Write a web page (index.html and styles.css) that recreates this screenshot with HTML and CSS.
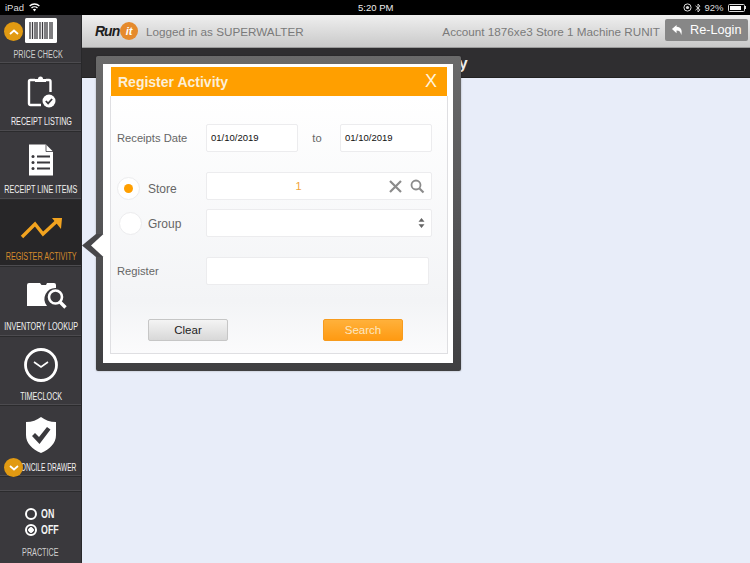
FILE: index.html
```html
<!DOCTYPE html>
<html lang="en">
<head>
<meta charset="utf-8">
<title>Register Activity</title>
<link rel="stylesheet" href="styles.css">
</head>
<body>
<div class="status">
  <div class="st-left"><span>iPad</span>
    <svg class="wifi" width="11" height="9" viewBox="0 0 13 10"><path d="M6.500 9.600 4.600 7.400a2.800 2.800 0 0 1 3.800 0zM3.500 6.200 2.400 5a6 6 0 0 1 8.200 0L9.500 6.200a4.400 4.400 0 0 0-6 0zM1.300 3.800.2 2.600a9.200 9.200 0 0 1 12.600 0l-1.100 1.200a7.600 7.600 0 0 0-10.400 0z" fill="#fff"/></svg>
  </div>
  <div class="st-time">5:20 PM</div>
  <div class="st-right">
    <svg width="9" height="9" viewBox="0 0 9 9"><circle cx="4.500" cy="4.500" r="3.600" fill="none" stroke="#ddd" stroke-width="1"/><circle cx="4.500" cy="4.500" r="1.600" fill="#ddd"/></svg>
    <svg width="6" height="10" viewBox="0 0 6 10"><path d="M.5 2.800 5 6.800 3 9V1l2 2.200L.5 7.200" fill="none" stroke="#ddd" stroke-width=".9"/></svg>
    <span>92%</span>
    <span class="batt"><span class="batt-fill"></span></span><span class="batt-tip"></span>
  </div>
</div>
<div class="app">
  <nav class="side">
    <div class="item i-price">
      <svg width="32" height="25" viewBox="0 0 32 25"><rect width="32" height="25" rx="1.500" fill="#fff"/><path d="M5 4v17M7.500 4v17M10 4v17M12 4v17M15 4v17M17.500 4v17M20 4v17M22 4v17M25 4v17M27 4v17" stroke="#3a393d" stroke-width="1.300"/></svg>
      <span class="lbl dim">PRICE CHECK</span>
    </div>
    <div class="item i-r">
      <svg width="30" height="34" viewBox="0 0 30 34"><path d="M9 6H4.500A1.500 1.500 0 0 0 3 7.500v22A1.500 1.500 0 0 0 4.500 31H15M20 6h3a1.500 1.500 0 0 1 1.500 1.500V18" fill="none" stroke="#fff" stroke-width="2.400"/><path d="M9 8V5h3a2.500 2.500 0 0 1 5 0h3v3z" fill="#fff"/><circle cx="23" cy="27" r="6.500" fill="#fff"/><path d="m19.800 27 2.300 2.400 4-4.400" fill="none" stroke="#3a393d" stroke-width="1.800"/></svg>
      <span class="lbl">RECEIPT LISTING</span>
    </div>
    <div class="item i-r i-li">
      <svg width="26" height="33" viewBox="0 0 26 33"><path d="M1 1h17l7 7v24H1z" fill="#fff"/><path d="M18 1v7h7" fill="none" stroke="#3a393d" stroke-width=".8"/><path d="M9 13h13M9 19h13M9 25h13" stroke="#3a393d" stroke-width="2"/><circle cx="5" cy="13" r="1.500" fill="#3a393d"/><circle cx="5" cy="19" r="1.500" fill="#3a393d"/><circle cx="5" cy="25" r="1.500" fill="#3a393d"/></svg>
      <span class="lbl">RECEIPT LINE ITEMS</span>
    </div>
    <div class="item i-r active">
      <svg width="42" height="24" viewBox="0 0 42 24"><path d="m2 20 13-13 8 10L37 4" fill="none" stroke="#f2a31f" stroke-width="3.400"/><path d="M32 1h10l-1 11z" fill="#f2a31f"/></svg>
      <span class="lbl orange">REGISTER ACTIVITY</span>
    </div>
    <div class="item i-r i-inv">
      <svg width="42" height="28" viewBox="0 0 42 28"><path d="M1 4a2 2 0 0 1 2-2h11l1.500 2H20l1-2h7a2 2 0 0 1 2 2v3a11 11 0 0 0-9 18H1z" fill="#fff"/><circle cx="29.500" cy="16" r="6.500" fill="none" stroke="#fff" stroke-width="2.600"/><path d="m34 21 5.500 5.500" stroke="#fff" stroke-width="3.400"/></svg>
      <span class="lbl">INVENTORY LOOKUP</span>
    </div>
    <div class="item i-r i-clock">
      <svg width="34" height="34" viewBox="0 0 34 34"><circle cx="17" cy="17" r="15.500" fill="none" stroke="#fff" stroke-width="2.800"/><path d="m10 14 7 5 7-5" fill="none" stroke="#fff" stroke-width="1.600"/></svg>
      <span class="lbl">TIMECLOCK</span>
    </div>
    <div class="item i-draw">
      <svg width="32" height="38" viewBox="0 0 32 38"><path d="M16 1c4 3 9 5 15 5v13c0 8-6 14-15 18C7 33 1 27 1 19V6c6 0 11-2 15-5z" fill="#fff"/><path d="m7 20 3-3 4 4 8-10 3.500 2.500L14.500 28z" fill="#3a393d"/></svg>
      <span class="lbl clip">RECONCILE DRAWER</span>
    </div>
    <div class="spacer"></div>
    <div class="item i-prac">
      <div class="onoff">
        <div class="oo-row"><span class="oo"></span><span class="oo-txt">ON</span></div>
        <div class="oo-row"><span class="oo sel"></span><span class="oo-txt">OFF</span></div>
      </div>
      <span class="lbl dim">PRACTICE</span>
    </div>
    <span class="badge up"><svg width="10" height="6" viewBox="0 0 10 6"><path d="m1 5 4-3.500L9 5" fill="none" stroke="#fff" stroke-width="1.800"/></svg></span>
    <span class="badge down"><svg width="10" height="6" viewBox="0 0 10 6"><path d="m1 1 4 3.500L9 1" fill="none" stroke="#fff" stroke-width="1.800"/></svg></span>
  </nav>
  <main class="main">
    <header class="top">
      <div class="logo"><span class="run">Run</span><span class="it">it</span></div>
      <span class="logged">Logged in as SUPERWALTER</span>
      <span class="acct">Account 1876xe3 Store 1 Machine RUNIT</span>
      <button class="relogin">
        <svg width="13" height="12" viewBox="0 0 14 13"><path d="M6 1 1 5.500 6 10V7c3 0 4.500 1.500 5 5 1.500-5 0-8.500-5-9z" fill="#fff"/></svg>
        <span>Re-Login</span>
      </button>
    </header>
    <div class="titlebar">Register Activity</div>
    <div class="content"></div>
  </main>
</div>

<section class="popup">
  <div class="pop-in">
    <div class="pop-head"><span>Register Activity</span><span class="x">X</span></div>
    <div class="pop-body">
      <div class="row r-date">
        <label class="cap">Receipts Date</label>
        <div class="field f-date">01/10/2019</div>
        <span class="to">to</span>
        <div class="field f-date">01/10/2019</div>
      </div>
      <div class="row r-store">
        <span class="radio on"><span></span></span>
        <label class="opt">Store</label>
        <div class="field f-wide f-store">
          <span class="val">1</span>
          <svg class="ic-x" width="13" height="13" viewBox="0 0 13 13"><path d="m1 1 11 11M12 1 1 12" stroke="#8b8b8b" stroke-width="2.200"/></svg>
          <svg width="15" height="15" viewBox="0 0 15 15"><circle cx="6" cy="6" r="4.500" fill="none" stroke="#8b8b8b" stroke-width="1.800"/><path d="m9.500 9.500 4 4" stroke="#8b8b8b" stroke-width="2.200"/></svg>
        </div>
      </div>
      <div class="row r-group">
        <span class="radio g"></span>
        <label class="opt">Group</label>
        <div class="field f-wide f-group">
          <svg width="7" height="10" viewBox="0 0 7 10"><path d="M3.500 0 6.500 3.800H.5zM3.500 10 .5 6.200h6z" fill="#666"/></svg>
        </div>
      </div>
      <div class="row r-reg">
        <label class="cap">Register</label>
        <div class="field f-reg"></div>
      </div>
      <div class="row r-btn">
        <button class="btn clear">Clear</button>
        <button class="btn search">Search</button>
      </div>
    </div>
  </div>
  <svg class="pointer" width="24" height="30" viewBox="0 0 24 30"><path d="M14 3 0 14.500 14 26h8V3z" fill="#47474a"/><path d="M22 2.500 9 14.500 22 26.500z" fill="#fff"/></svg>
</section>
</body>
</html>
```
FILE: styles.css
```css
* { box-sizing: border-box; }
html, body { margin: 0; height: 100%; overflow: hidden; }
body { width: 750px; height: 563px; position: relative; font-family: "Liberation Sans", Arial, sans-serif; background: #e8edf9; display: flex; flex-direction: column; }

.status { height: 15px; background: #000; color: #ddd; font-size: 9.500px; display: flex; align-items: center; justify-content: space-between; padding: 0 4px 0 5px; position: relative; flex: none; }
.st-left { display: flex; align-items: center; gap: 5px; }
.st-time { position: absolute; left: 358px; top: 1px; font-size: 9.500px; color: #eee; line-height: 13px; }
.st-right { display: flex; align-items: center; gap: 3px; }
.batt { width: 17px; height: 8px; border: 1px solid #ddd; border-radius: 1.500px; padding: 1px; display: block; margin-left: 1px; }
.batt-fill { display: block; height: 100%; width: 92%; background: #fff; }
.batt-tip { width: 1.500px; height: 3px; background: #ddd; margin-left: -3px; }

.app { flex: 1; display: flex; min-height: 0; }
.side { width: 82px; flex: none; background: #3a393d; position: relative; display: flex; flex-direction: column; border-right: 1px solid #28282a; }
.item { display: flex; flex-direction: column; align-items: center; border-bottom: 1px solid #2b2b2d; box-shadow: inset 0 -1px 0 #4c4b4f; flex: none; }
.lbl { font-size: 10px; color: #f2f2f2; white-space: nowrap; line-height: 12px; transform: scaleX(.72); margin-left: 1px; }
.lbl.dim { color: #cfcfcf; }
.lbl.orange { color: #d58b2c; }
.i-price { height: 49px; padding-top: 3px; }
.i-price .lbl { margin: 6px 0 0 -4px; }
.i-r { height: 68px; padding-top: 10px; }
.i-r svg { height: 34px; margin-bottom: 8px; }
.i-li { padding-top: 11px; }
.i-li svg { margin-bottom: 7px; }
.active { background: #272628; padding-top: 17px; height: 67px; }
.active svg { height: 24px; margin-bottom: 10px; }
.i-inv { height: 70px; padding-top: 14px; }
.i-inv svg { height: 28px; margin: 0 0 12px 12px; }
.i-clock { height: 69px; padding-top: 11px; }
.i-clock svg { margin-bottom: 9px; }
.i-draw { height: 71px; padding-top: 10px; }
.i-draw svg { margin-bottom: 8px; }
.lbl.clip { transform: scaleX(.66); margin-left: 2px; }
.spacer { height: 15px; border-bottom: 1px solid #2b2b2d; box-shadow: inset 0 -1px 0 #4c4b4f; flex: none; }
.i-prac { flex: 1; border: 0; box-shadow: none; padding-top: 15px; }
.i-prac .lbl { margin: 10px 0 0; }
.onoff { display: flex; flex-direction: column; gap: 2px; font-size: 13px; font-weight: 700; color: #f4f4f4; line-height: 14px; }
.oo-row { display: flex; align-items: center; gap: 4px; }
.oo-txt { width: 16px; transform: scaleX(.68); transform-origin: left center; }
.oo { width: 12px; height: 12px; border: 2px solid #fff; border-radius: 50%; display: block; }
.oo.sel { background: radial-gradient(circle, #fff 0 2.500px, transparent 3px); }
.badge { position: absolute; left: 4px; width: 19px; height: 19px; border-radius: 50%; background: #e19a12; display: flex; align-items: center; justify-content: center; }
.badge.up { top: 7px; }
.badge.down { top: 443px; }

.main { flex: 1; display: flex; flex-direction: column; min-width: 0; }
.top { height: 33px; flex: none; background: linear-gradient(#efefef, #c9c9c9); border-bottom: 1px solid #9a9a9a; display: flex; align-items: center; padding: 0 2px 0 13px; color: #7a7a7a; font-size: 11.700px; }
.logo { display: flex; align-items: center; width: 43px; flex: none; }
.run { font-weight: 700; font-style: italic; font-size: 14px; color: #1e1e1e; letter-spacing: -1px; }
.it { width: 18px; height: 18px; border-radius: 50%; background: #e58a2c; color: #fff; font-weight: 700; font-style: italic; font-size: 11px; text-align: center; line-height: 18px; margin-left: 1px; }
.logged { margin-left: 8px; }
.acct { margin-left: auto; margin-right: 5px; }
.relogin { width: 83px; height: 22px; border: 0; border-radius: 2px; background: #878787; color: #fff; font: 12.700px "Liberation Sans", Arial, sans-serif; display: flex; align-items: center; gap: 6px; padding: 0 0 0 6px; margin-top: -3px; }
.titlebar { height: 30px; flex: none; background: #2f2e30; color: #eee; font-size: 16px; font-weight: 700; padding: 7px 0 0 260px; line-height: 18px; border-bottom: 1px solid #222; }
.content { flex: 1; background: #e8edf9; }

.popup { position: absolute; left: 96px; top: 56px; width: 365px; height: 315px; padding: 8px 8px 8px 7px; border-radius: 2px; background: linear-gradient(#6a6a6a, #5a5a5c 40%, #3f3f41); box-shadow: 0 0 2px rgba(0,0,0,.3); }
.pointer { position: absolute; left: -14px; top: 175px; }
.pop-in { background: #fff; height: 299px; padding: 3px 5px 9px 7px; display: flex; flex-direction: column; }
.pop-head { height: 29px; flex: none; margin: 0 1px; background: #ff9f00; color: #fcefd8; font-weight: 700; font-size: 14px; display: flex; align-items: center; justify-content: space-between; padding: 0 10px 0 7px; }
.x { font-weight: 400; font-size: 18px; color: #fff3dc; }
.pop-body { flex: 1; border: 1px solid #dfdfe2; border-top: 0; background: linear-gradient(#fff, #f3f4f6 80%, #fbfbfc); padding: 28px 0 0 6px; display: flex; flex-direction: column; color: #666; font-size: 11.200px; }
.row { display: flex; align-items: center; flex: none; }
.field { height: 28px; background: #fff; border: 1px solid #ececee; border-radius: 2px; flex: none; }
.cap { width: 89px; flex: none; padding-bottom: 1px; }
.f-date { width: 92px; color: #111; font-size: 9.500px; line-height: 26px; padding-left: 4px; }
.to { width: 42px; text-align: center; padding-right: 4px; }
.r-date { height: 28px; }
.r-store { height: 28px; margin-top: 20px; }
.r-group { height: 28px; margin-top: 9px; }
.r-reg { height: 28px; margin-top: 20px; }
.radio { width: 23px; height: 23px; border-radius: 50%; background: #fff; border: 1px solid #ececee; flex: none; display: flex; align-items: center; justify-content: center; }
.r-store .radio { margin-top: 4px; }
.radio span { width: 9px; height: 9px; border-radius: 50%; background: #ff9f00; }
.radio.g { margin-left: 2px; }
.opt { flex: none; width: 58px; margin-left: 8px; font-size: 12px; padding-top: 2px; }
.r-store .opt { padding-top: 5px; }
.r-group .opt { margin-left: 6px; }
.f-wide { width: 226px; display: flex; align-items: center; justify-content: flex-end; }
.f-store { position: relative; padding-right: 6px; gap: 8px; }
.val { position: absolute; left: 0; right: 41px; text-align: center; color: #f2a33a; font-size: 11px; }
.f-group { padding-right: 6px; }
.f-reg { width: 223px; }
.r-btn { margin-top: 34px; padding-left: 31px; gap: 95px; }
.btn { width: 80px; height: 22px; border-radius: 2px; font: 11.500px "Liberation Sans", Arial, sans-serif; padding: 0; }
.clear { background: linear-gradient(#f4f4f4, #d8d8d8); border: 1px solid #c6c6c6; color: #222; }
.search { background: linear-gradient(#ffb13b, #ff9a12); border: 1px solid #f79b1e; color: #fde7c2; }
```
